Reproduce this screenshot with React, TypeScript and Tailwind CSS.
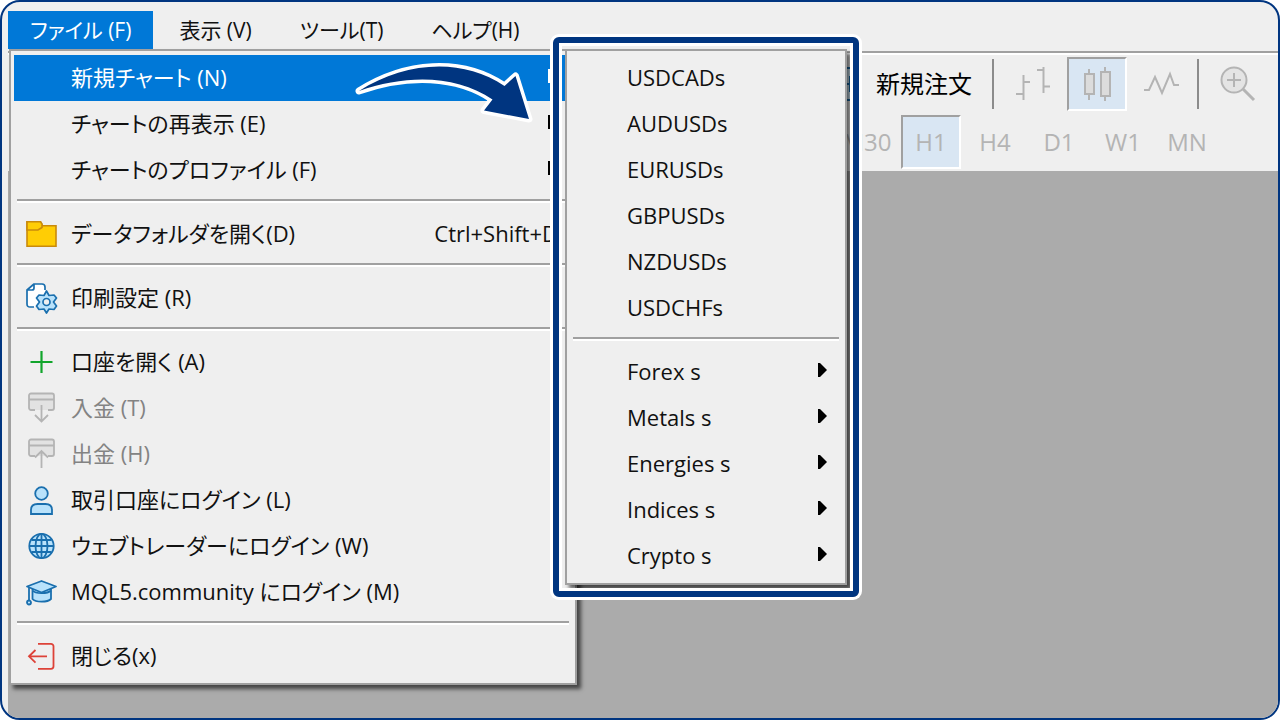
import { useState, type ReactNode } from "react";
import clsx from "clsx";

type Entry = {
  label: string;
  icon?: ReactNode;
  shortcut?: string;
  submenu?: boolean;
  disabled?: boolean;
};

const FolderIcon = () => (
  <svg viewBox="0 0 32 32" className="size-8" fill="#ffcd05" stroke="#c98a0c" strokeWidth="1.6">
    <path d="M1 28.200V3.800h13.500l2 4H30v20.400Z" />
    <path d="M1 12h11l4-2.500V6l-1.500-2.200H1Z" />
  </svg>
);

const PrintSetupIcon = () => (
  <svg viewBox="0 0 32 32" className="size-8" stroke="#1a6fae" strokeWidth="1.7" strokeLinejoin="round">
    <path d="M9 25H4c-2 0-3-1-3-3V8l7-6h8c2 0 3 1 3 3v8Z" fill="#fff" stroke="none" />
    <path d="M8 25H4c-2 0-3-1-3-3V8l7-6h8c2 0 3 1 3 3v3M1.500 8H6c1.500 0 2-.5 2-2V2" fill="none" />
    <path
      d="m20.500 9 2.500 4.500 5-.5 2.500 3-3 4 3 4-2.500 3.500-5-.5-2.500 4-2.500-4-5 .5-2.500-3.500 3-4-3-4 2.500-3 5 .5Z"
      fill="#b9e2fb"
    />
    <circle cx="20.500" cy="20" r="3.500" fill="#efefef" />
  </svg>
);

const PlusIcon = () => (
  <svg viewBox="0 0 32 32" className="size-8" stroke="#12a52c" strokeWidth="2.200">
    <path d="M15.500 5v22M4.500 16h22" />
  </svg>
);

const CardIcon = ({ up }: { up?: boolean }) => (
  <svg viewBox="0 0 32 32" className="size-8" fill="none" stroke="#b4b4b4" strokeWidth="1.800">
    <path d="M5 1.500h21a2 2 0 0 1 2 2V18H3V3.500a2 2 0 0 1 2-2Z" fill="#e2e2e2" stroke="none" />
    <path d="M9 18H5a2 2 0 0 1-2-2V3.500a2 2 0 0 1 2-2h21a2 2 0 0 1 2 2V16a2 2 0 0 1-2 2h-4M3 7.500h25" />
    <path d={up ? "M15.500 30V13M9 19.500l6.500-6.500 6.500 6.500" : "M15.500 13v16.500M9 23l6.500 6.500L22 23"} />
  </svg>
);

const UserIcon = () => (
  <svg viewBox="0 0 32 32" className="size-8" fill="#b9e2fb" stroke="#1a6fae" strokeWidth="1.800">
    <circle cx="15.500" cy="9.500" r="6.300" />
    <path d="M5 30v-4c0-4 2.500-6 6.500-6h8c4 0 6.500 2 6.500 6v4Z" />
  </svg>
);

const GlobeIcon = () => (
  <svg viewBox="0 0 32 32" className="size-8" fill="none" stroke="#1a6fae" strokeWidth="1.800">
    <circle cx="15.500" cy="16" r="12.200" fill="#b9e2fb" />
    <ellipse cx="15.500" cy="16" rx="6" ry="12.200" />
    <path d="M15.500 4v24M3.500 16h24M5.500 10h20M5.500 22h20" />
  </svg>
);

const AcademyIcon = () => (
  <svg viewBox="0 0 32 32" className="size-8" fill="#b9e2fb" stroke="#1a6fae" strokeWidth="1.800" strokeLinejoin="round">
    <path d="M6.500 13v10c3 3.500 15 3.500 18.500 0V13Z" />
    <path d="M6.500 14.500c3 3.500 15 3.500 18.500 0" />
    <path d="M1 10.500 15.500 5 30 10.500 15.500 16.500Z" />
    <path d="M3 11.500v13" fill="none" />
    <circle cx="3" cy="26.500" r="2" />
  </svg>
);

const ExitIcon = () => (
  <svg viewBox="0 0 32 32" className="size-8" fill="none" stroke="#dd4238" strokeWidth="1.800">
    <path d="M12 3.800h13a2.500 2.500 0 0 1 2.500 2.500v20a2.500 2.500 0 0 1-2.500 2.500H12M21 16.300H3M9.500 10 3 16.300l6.500 6.300" />
  </svg>
);

const TITLES = ["ファイル (F)", "表示 (V)", "ツール(T)", "ヘルプ(H)"];

const FILE_MENU: Entry[][] = [
  [
    { label: "新規チャート (N)", submenu: true },
    { label: "チャートの再表示 (E)", submenu: true },
    { label: "チャートのプロファイル (F)", submenu: true },
  ],
  [{ label: "データフォルダを開く(D)", icon: <FolderIcon />, shortcut: "Ctrl+Shift+D" }],
  [{ label: "印刷設定 (R)", icon: <PrintSetupIcon /> }],
  [
    { label: "口座を開く (A)", icon: <PlusIcon /> },
    { label: "入金 (T)", icon: <CardIcon />, disabled: true },
    { label: "出金 (H)", icon: <CardIcon up />, disabled: true },
    { label: "取引口座にログイン (L)", icon: <UserIcon /> },
    { label: "ウェブトレーダーにログイン (W)", icon: <GlobeIcon /> },
    { label: "MQL5.community にログイン (M)", icon: <AcademyIcon /> },
  ],
  [{ label: "閉じる(x)", icon: <ExitIcon /> }],
];

const CHART_MENU: Entry[][] = [
  ["USDCADs", "AUDUSDs", "EURUSDs", "GBPUSDs", "NZDUSDs", "USDCHFs"].map((label) => ({ label })),
  ["Forex s", "Metals s", "Energies s", "Indices s", "Crypto s"].map((label) => ({
    label,
    submenu: true,
  })),
];

const PERIODS = ["M30", "H1", "H4", "D1", "W1", "MN"];

function Menu({
  groups,
  active,
  className,
}: {
  groups: Entry[][];
  active?: string;
  className?: string;
}) {
  return (
    <div
      role="menu"
      className={clsx(
        "absolute border-2 border-[#a0a0a0] bg-[#efefef] px-[3px] py-1 shadow-[4px_4px_4px_rgba(0,0,0,0.6)]",
        className
      )}
    >
      {groups.map((group, i) => (
        <div key={i}>
          {i > 0 && (
            <div role="separator" className="px-[3px] pb-2 pt-[6px]">
              <div className="h-1 border-b-2 border-t-2 border-b-white border-t-[#a0a0a0]" />
            </div>
          )}
          {group.map((entry) => (
            <button
              key={entry.label}
              type="button"
              role="menuitem"
              disabled={entry.disabled}
              className={clsx(
                "flex h-[46px] w-full items-center whitespace-nowrap pb-[2px] pl-3 pr-[14px] text-left",
                entry.label === active && "bg-[#0078d7] text-white",
                entry.disabled && "text-[#838383]"
              )}
            >
              <span className="mr-[13px] mt-[2px] size-8 shrink-0">{entry.icon}</span>
              {entry.label}
              {entry.shortcut && <span className="ml-auto">{entry.shortcut}</span>}
              {entry.submenu && (
                <svg
                  viewBox="0 0 10 16"
                  className="mb-[2px] ml-auto h-4 w-[10px]"
                  fill={entry.label === active ? "white" : "black"}
                >
                  <path d="M0 1h2l7 7-7 7H0Z" />
                </svg>
              )}
            </button>
          ))}
        </div>
      ))}
    </div>
  );
}

function ToolButton({
  pressed,
  label,
  onClick,
  children,
}: {
  pressed?: boolean;
  label: string;
  onClick?: () => void;
  children: ReactNode;
}) {
  return (
    <button
      type="button"
      aria-label={label}
      aria-pressed={pressed}
      onClick={onClick}
      className={clsx(
        "flex h-[54px] w-[60px] shrink-0 items-center justify-center border-2 text-2xl text-[#b4b4b4]",
        pressed
          ? "border-b-white border-l-[#a0a0a0] border-r-white border-t-[#a0a0a0] bg-[#d9e6f3]"
          : "border-transparent"
      )}
    >
      {children}
    </button>
  );
}

export default function App() {
  const [period, setPeriod] = useState("H1");

  return (
    <div className="min-h-screen bg-white font-['Open_Sans','Noto_Sans_CJK_JP',sans-serif] text-[22px] leading-8 text-[#111]">
      <div className="relative flex min-h-screen flex-col overflow-hidden rounded-[20px] border-2 border-[#003580] bg-[#efefef] pl-[6px] [font-feature-settings:'palt']">
        <nav className="flex gap-1 pt-[9px] text-[21px]">
          {TITLES.map((title, i) => (
            <button
              key={title}
              type="button"
              className={clsx("h-[38px] px-[22px]", i === 0 && "bg-[#0078d7] text-white")}
            >
              {title}
            </button>
          ))}
        </nav>

        <div className="mt-[2px] border-t-2 border-[#a0a0a0] shadow-[inset_0_2px_0_white]">
          <div className="flex items-center pl-[820px] pt-1">
            <button type="button" className="flex items-center gap-[14px] text-2xl text-black">
              <svg viewBox="0 0 34 36" className="h-9 w-[34px]" fill="#d5ecfb" stroke="#1a6fae" strokeWidth="2">
                <path d="M1 2h32v32H1ZM22 10v16M14 18h16" />
              </svg>
              新規注文
            </button>
            <span className="ml-5 mr-[9px] h-[50px] w-[2px] bg-[#8c8c8c]" />
            <div className="flex gap-1">
              <ToolButton label="バーチャート">
                <svg viewBox="0 0 36 36" className="size-9" fill="none" stroke="currentColor" strokeWidth="2">
                  <path d="M8.500 9v25M8.500 16H15M1 28h7.500M28.500 1v26M22 4h6.500M28.500 20.500H35" />
                </svg>
              </ToolButton>
              <ToolButton label="ローソク足" pressed>
                <svg viewBox="0 0 36 36" className="size-9" fill="#dcdcdc" stroke="currentColor" strokeWidth="2">
                  <path d="M10 3v31M26 1v34" />
                  <path d="M6 8h9v20H6ZM22 6h9v24h-9Z" />
                </svg>
              </ToolButton>
              <ToolButton label="ラインチャート">
                <svg viewBox="0 0 36 36" className="size-9" fill="none" stroke="currentColor" strokeWidth="2">
                  <path d="M1 24h5l6-13 7 16 8-19 4 11h5" />
                </svg>
              </ToolButton>
            </div>
            <span className="ml-[6px] mr-[9px] h-[50px] w-[2px] bg-[#8c8c8c]" />
            <ToolButton label="ズームイン">
              <svg viewBox="0 0 36 36" className="size-9" fill="none" stroke="currentColor" strokeWidth="2">
                <circle cx="14" cy="14" r="12.500" fill="#e4e4e4" />
                <path d="M7 14h14M14 7v14" />
                <path d="m23 23 11 11" strokeWidth="3" />
              </svg>
            </ToolButton>
          </div>
          <div className="flex gap-1 pb-[2px] pl-[829px] pt-1">
            {PERIODS.map((p) => (
              <ToolButton key={p} label={p} pressed={p === period} onClick={() => setPeriod(p)}>
                {p}
              </ToolButton>
            ))}
          </div>
        </div>

        <main className="flex-1 bg-[#ababab]" />

        <Menu groups={FILE_MENU} active="新規チャート (N)" className="left-[7px] top-[47px] w-[568px]" />
        <Menu groups={CHART_MENU} className="left-[563px] top-[47px] w-[282px]" />

        {/* callout frame round the symbol list */}
        <div className="pointer-events-none absolute left-[551px] top-[35px] h-[560px] w-[306px] rounded-md border-[6px] border-[#003580] shadow-[0_0_0_3px_white,inset_0_0_0_3px_white]" />

        <svg
          viewBox="350 55 190 75"
          className="pointer-events-none absolute left-[348px] top-[53px] h-[75px] w-[190px]"
          fill="#003580"
          stroke="white"
          strokeWidth="7"
          strokeLinejoin="round"
          paintOrder="stroke"
        >
          <path d="M359 91C405 62 461 57 504.500 86L515.500 76 529 119 484 110.500 492.500 99.500C457 75 407 74 359 91Z" />
        </svg>
      </div>
    </div>
  );
}
